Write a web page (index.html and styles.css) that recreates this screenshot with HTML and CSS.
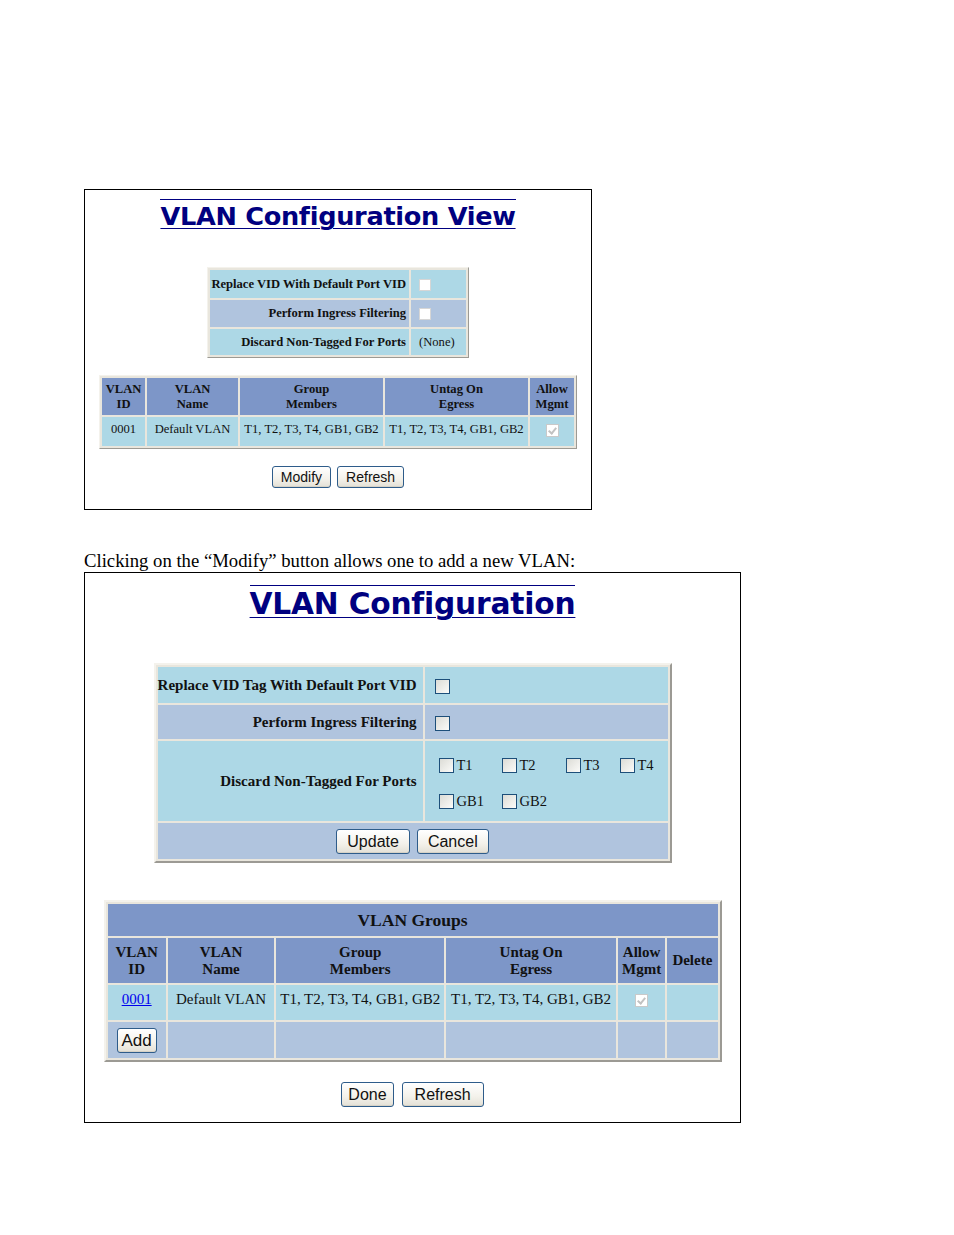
FILE: index.html
```html
<!DOCTYPE html>
<html>
<head>
<meta charset="utf-8">
<link rel="stylesheet" href="styles.css">
</head>
<body>
<div class="page">
  <div class="box box1">
    <h1 class="title t1"><span>VLAN Configuration View</span></h1>
    <table class="settings s1">
      <tr class="lb r1"><th>Replace VID With Default Port VID</th><td><span class="cb plain"></span></td></tr>
      <tr class="ls r2"><th>Perform Ingress Filtering</th><td><span class="cb plain"></span></td></tr>
      <tr class="lb r3"><th>Discard Non-Tagged For Ports</th><td class="none">(None)</td></tr>
    </table>
    <table class="grid g1">
      <colgroup><col class="c1"><col class="c2"><col class="c3"><col class="c4"><col class="c5"></colgroup>
      <tr class="hd"><th>VLAN<br>ID</th><th>VLAN<br>Name</th><th>Group<br>Members</th><th>Untag On<br>Egress</th><th>Allow<br>Mgmt</th></tr>
      <tr class="lb dr"><td>0001</td><td>Default VLAN</td><td>T1, T2, T3, T4, GB1, GB2</td><td>T1, T2, T3, T4, GB1, GB2</td><td><span class="cb dis"></span></td></tr>
    </table>
    <div class="btns b1"><button class="btn">Modify</button><button class="btn">Refresh</button></div>
  </div>
  <p class="caption">Clicking on the “Modify” button allows one to add a new VLAN:</p>
  <div class="box box2">
    <h1 class="title t2"><span>VLAN Configuration</span></h1>
    <table class="settings s2">
      <colgroup><col class="e1"><col class="e2"></colgroup>
      <tr class="lb q1"><th>Replace VID Tag With Default Port VID</th><td><span class="cb edit"></span></td></tr>
      <tr class="ls q2"><th>Perform Ingress Filtering</th><td><span class="cb edit"></span></td></tr>
      <tr class="lb q3"><th>Discard Non-Tagged For Ports</th><td>
        <div class="ports">
          <label class="port"><span class="cb edit"></span>T1</label>
          <label class="port"><span class="cb edit"></span>T2</label>
          <label class="port"><span class="cb edit"></span>T3</label>
          <label class="port"><span class="cb edit"></span>T4</label>
          <label class="port"><span class="cb edit"></span>GB1</label>
          <label class="port"><span class="cb edit"></span>GB2</label>
        </div>
      </td></tr>
      <tr class="ls q4"><td colspan="2"><div class="btns bu"><button class="btn big">Update</button><button class="btn big">Cancel</button></div></td></tr>
    </table>
    <table class="grid g2">
      <colgroup><col class="d1"><col class="d2"><col class="d3"><col class="d4"><col class="d5"><col class="d6"></colgroup>
      <tr class="hd cap"><th colspan="6">VLAN Groups</th></tr>
      <tr class="hd hr"><th>VLAN<br>ID</th><th>VLAN<br>Name</th><th>Group<br>Members</th><th>Untag On<br>Egress</th><th>Allow<br>Mgmt</th><th>Delete</th></tr>
      <tr class="lb dr"><td><a href="#" class="link">0001</a></td><td>Default VLAN</td><td>T1, T2, T3, T4, GB1, GB2</td><td>T1, T2, T3, T4, GB1, GB2</td><td><span class="cb dis"></span></td><td></td></tr>
      <tr class="ls ar"><td><button class="btn big add">Add</button></td><td></td><td></td><td></td><td></td><td></td></tr>
    </table>
    <div class="btns b2"><button class="btn big done">Done</button><button class="btn big refr">Refresh</button></div>
  </div>
</div>
</body>
</html>
```

FILE: styles.css
```css
html, body { margin: 0; padding: 0; background: #fff; }
.page { padding: 189px 0 0 84px; }

.box { border: 1px solid #000; box-sizing: border-box; }
.box1 { width: 508px; height: 321px; padding-top: 9px; }
.box2 { width: 657px; height: 551px; padding-top: 12px; }

.title { margin: 0; text-align: center; font-family: "DejaVu Sans", Verdana, sans-serif; font-weight: bold; color: #000080; }
.title span { display: inline-block; border-top: 1px solid #000080; text-decoration: underline; text-decoration-thickness: 1px; text-underline-offset: 3px; }
.t1 { font-size: 25.6px; line-height: 32px; letter-spacing: -0.3px; }
.t2 { font-size: 29.7px; line-height: 35px; letter-spacing: -0.2px; }

table { border-collapse: separate; margin-left: auto; margin-right: auto; font-family: "Liberation Serif", "Times New Roman", serif; color: #111; background: #e9e6dd; border: 1px solid; border-color: #f4f2ec #9c9a94 #9c9a94 #f4f2ec; }
th, td { padding: 0; white-space: nowrap; }
.lb > th, .lb > td { background: #add8e6; }
.ls > th, .ls > td { background: #b0c4de; }
.hd > th { background: #7d96c8; }

/* settings 1 */
.s1 { margin-top: 35px; width: 262px; border-spacing: 2px; font-size: 12.6px; }
.s1 th { text-align: right; padding-right: 3px; width: 196px; font-weight: bold; }
.s1 td { padding-left: 8px; }
.s1 .r1 { height: 28px; }
.s1 .r2 { height: 27px; }
.s1 .r3 { height: 26px; }

/* grid 1 */
.g1 { margin-top: 17px; width: 478px; border-spacing: 2px; font-size: 12.6px; table-layout: fixed; }
.g1 th { font-weight: bold; line-height: 15px; height: 37px; }
.g1 td { text-align: center; vertical-align: top; padding-top: 5px; height: 24px; overflow: hidden; }
.c1 { width: 43px; } .c2 { width: 91px; } .c3 { width: 143px; } .c4 { width: 143px; } .c5 { width: 44px; }

.btns { display: flex; justify-content: center; gap: 6px; }
.b1 { margin-top: 17px; }
.btn { font-family: "Liberation Sans", Arial, sans-serif; font-size: 14px; color: #111; background: linear-gradient(#ffffff, #f3f1ea 60%, #e3e0d6); border: 1px solid #2e5c8a; border-radius: 3px; padding: 0 8px; height: 22px; line-height: 20px; box-shadow: inset 0 -1px 0 #d6d2c6; }
.btn.big { font-size: 16px; height: 25px; line-height: 23px; padding: 0 10px; }
.bu { gap: 7px; }

.caption { margin: 40px 0 0 0; font-family: "Liberation Serif", "Times New Roman", serif; font-size: 18.7px; line-height: 22px; height: 22px; color: #000; }

/* checkboxes */
.cb { display: inline-block; box-sizing: border-box; width: 13px; height: 13px; vertical-align: middle; position: relative; }
.cb.plain { background: #fff; border: 1px solid #d6d6d6; width: 12px; height: 12px; }
.cb.edit { background: linear-gradient(135deg, #dcdcd6, #fbfbf9); border: 1px solid #1d4f7a; width: 15px; height: 15px; flex: none; }
.cb.dis { background: #fff; border: 1px solid #c9c9c9; width: 13px; height: 13px; }
.cb.dis::after { content: ""; position: absolute; left: 3px; top: 1px; width: 3px; height: 6px; border: solid #c2c2c2; border-width: 0 2px 2px 0; transform: rotate(40deg); }

/* settings 2 */
.s2 { margin-top: 42px; width: 518px; border-spacing: 2px; font-size: 15px; border-width: 2px; table-layout: fixed; }
.e1 { width: 265px; } .e2 { width: auto; }
.s2 th { text-align: right; padding-right: 6px; font-weight: bold; }
.s2 td { padding-left: 10px; }
.s2 .q1 { height: 36px; }
.s2 .q2 { height: 34px; }
.s2 .q3 { height: 80px; }
.s2 .q4 > td { height: 36px; padding-left: 0; }
.s2 .q3 td { padding-left: 14px; }
.ports { display: grid; grid-template-columns: 63px 64px 54px 50px; row-gap: 19px; padding-top: 4px; }
.port { display: flex; align-items: center; gap: 3px; font-size: 14.5px; }

/* grid 2 */
.g2 { margin-top: 37px; width: 618px; border-spacing: 2px; font-size: 15px; border-width: 2px; }
.g2 .cap > th { height: 32px; font-size: 17.5px; font-weight: bold; }
.g2 .hr > th { height: 45px; line-height: 17px; font-weight: bold; }
.g2 .dr > td { height: 35px; text-align: center; vertical-align: top; padding-top: 6px; box-sizing: border-box; }
.g2 .ar > td { height: 36px; text-align: center; }
.d1 { width: 58px; } .d2 { width: 106px; } .d3 { width: 167px; } .d4 { width: 169px; } .d5 { width: 47px; } .d6 { width: 50px; }
.link { color: #0000ee; text-decoration: underline; }
.btn.add { padding: 0 4px; font-size: 17px; }
.b2 { margin-top: 20px; gap: 8px; }
.btn.done { padding: 0 6px; }
.btn.refr { padding: 0 12px; }
```
